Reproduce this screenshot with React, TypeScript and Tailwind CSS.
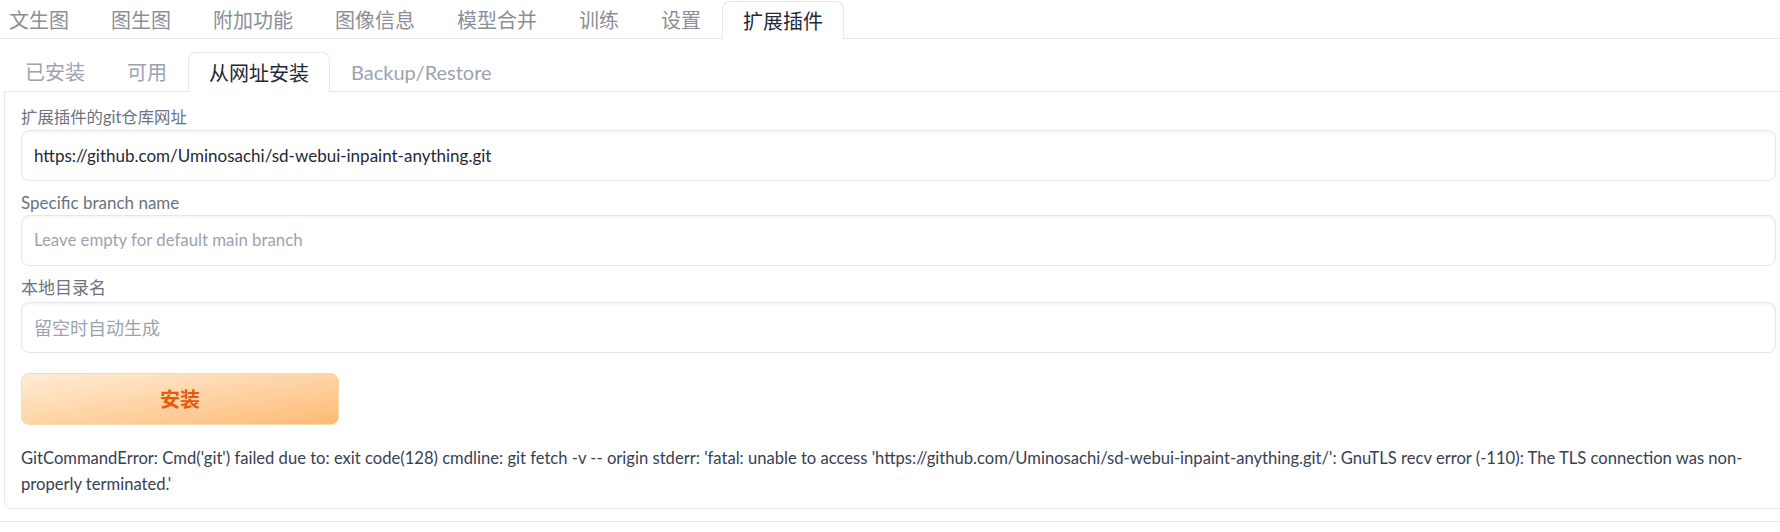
import React from "react";

const topTabs = ["文生图", "图生图", "附加功能", "图像信息", "模型合并", "训练", "设置", "扩展插件"];
const subTabs = ["已安装", "可用", "从网址安装", "Backup/Restore"];

function Field({
  label,
  value,
  placeholder,
  labelSize,
  phSize,
  gapClass,
}: {
  label: string;
  value?: string;
  placeholder?: string;
  labelSize: string;
  phSize: string;
  gapClass: string;
}) {
  return (
    <div className={`flex flex-col ${gapClass}`}>
      <div className={`h-[24px] flex items-center leading-none text-[#6b7280] ${labelSize}`}>{label}</div>
      <div className="h-[51px] rounded-[8px] border border-[#e5e7eb] bg-white shadow-[inset_0_1px_3px_rgba(0,0,0,0.06)] px-3 flex items-center leading-none">
        {value ? (
          <span className="text-[17px] text-[#1f2937]">{value}</span>
        ) : (
          <span className={`text-[#9ca3af] ${phSize}`}>{placeholder}</span>
        )}
      </div>
    </div>
  );
}

export default function App() {
  return (
    <div className="w-[1780px] h-[532px] overflow-hidden bg-white font-['Lato','Noto_Sans_CJK_SC',sans-serif]">
      <div className="flex items-end h-[39px] border-b border-[#e5e7eb]">
        <div className="flex items-end -ml-[12px]">
          {topTabs.map((t) =>
            t === "扩展插件" ? (
              <div key={t} className="h-[38px] -mb-px px-5 flex items-center border border-b-0 border-[#e5e7eb] rounded-t-[8px] bg-white text-[20px] leading-none text-[#1f2937]">
                {t}
              </div>
            ) : (
              <div key={t} className="h-[37px] px-5 flex items-center border border-transparent text-[20px] leading-none text-[#8a8f98]">
                {t}
              </div>
            )
          )}
        </div>
      </div>

      <div className="w-[1789px] ml-[4px] mt-[13px]">
        <div className="flex items-end h-[40px] border-b border-[#e5e7eb]">
          {subTabs.map((t) =>
            t === "从网址安装" ? (
              <div key={t} className="h-[40px] -mb-px px-5 flex items-center border border-b-0 border-[#e5e7eb] rounded-t-[8px] bg-white text-[20px] leading-none text-[#1f2937]">
                {t}
              </div>
            ) : (
              <div key={t} className="h-[39px] px-5 flex items-center border border-transparent text-[20px] leading-none text-[#9ca3af]">
                {t}
              </div>
            )
          )}
        </div>

        <div className="border border-t-0 border-[#e5e7eb] rounded-b-[8px] px-4 pt-[13px] pb-[11px]">
          <div className="flex flex-col gap-[9px]">
            <Field
              label="扩展插件的git仓库网址"
              value="https://github.com/Uminosachi/sd-webui-inpaint-anything.git"
              labelSize="text-[16.4px]"
              phSize="text-[17px]"
              gapClass="gap-px"
            />
            <Field
              label="Specific branch name"
              placeholder="Leave empty for default main branch"
              labelSize="text-[17px]"
              phSize="text-[16.8px]"
              gapClass="gap-px"
            />
            <Field
              label="本地目录名"
              placeholder="留空时自动生成"
              labelSize="text-[17px]"
              phSize="text-[18px]"
              gapClass="gap-[3px]"
            />
          </div>

          <button className="mt-[20px] w-[318px] h-[52px] rounded-[8px] border border-[#fed7aa] bg-linear-to-br from-[#ffedd5] to-[#fdba74] flex items-center justify-center text-[20px] font-bold text-[#ea580c] leading-none">
            安装
          </button>

          <div className="mt-[20px] text-[16.6px] leading-[26px] text-[#374151]">
            <div className="whitespace-nowrap">
              GitCommandError: Cmd('git') failed due to: exit code(128) cmdline: git fetch -v -- origin stderr: 'fatal: unable to access 'https://github.com/Uminosachi/sd-webui-inpaint-anything.git/': GnuTLS recv error (-110): The TLS connection was non-
            </div>
            <div>properly terminated.'</div>
          </div>
        </div>
      </div>

      <div className="mt-[12px] border-t border-[#e5e7eb]" />
    </div>
  );
}
